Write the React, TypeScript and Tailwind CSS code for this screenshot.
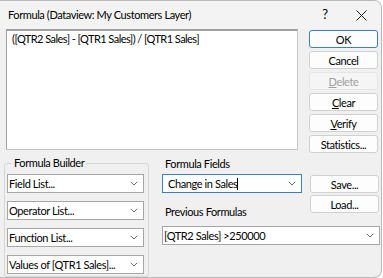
import React from "react";

function Chevron() {
  return (
    <svg width="8" height="5" viewBox="0 0 8 5" className="shrink-0">
      <path d="M0.8 0.8 L4 4 L7.2 0.8" fill="none" stroke="#6a6a6a" strokeWidth="1" />
    </svg>
  );
}

function Btn({
  children,
  primary,
  disabled,
}: {
  children: React.ReactNode;
  primary?: boolean;
  disabled?: boolean;
}) {
  let cls = "border-[#d0d0d0] bg-[#fdfdfd] text-black";
  if (primary) cls = "border-[#3b7fc4] bg-[#fdfdfd] text-black";
  if (disabled) cls = "border-[#e5e5e5] bg-[#f5f5f5] text-[#a0a0a0]";
  return (
    <div
      className={`h-[18px] w-[69px] rounded-[3px] border flex items-center justify-center text-[11px] leading-none ${cls}`}
    >
      {children}
    </div>
  );
}

function Combo({
  text,
  focused,
  className,
  pl,
}: {
  text: React.ReactNode;
  focused?: boolean;
  className?: string;
  pl?: string;
}) {
  return (
    <div
      className={`h-[19px] bg-white border flex items-center justify-between pr-[5px] text-[11px] leading-none ${
        focused ? "border-[#3b7fc4]" : "border-[#a6a6a6]"
      } ${pl ?? "pl-[1px]"} ${className ?? ""}`}
    >
      <span className="whitespace-nowrap">{text}</span>
      <Chevron />
    </div>
  );
}

export default function App() {
  return (
    <div className="w-[383px] h-[278px] bg-white font-['Lato',sans-serif] tracking-[-0.4px] text-black">
      <div className="w-[382px] h-[278px] bg-[#f0f0f0] border-t border-r border-b border-[#b9b9b9] rounded-tr-[8px] rounded-br-[8px] flex flex-col overflow-hidden">
        {/* Title bar */}
        <div className="h-[28px] shrink-0 flex items-center bg-[#f3f3f3] pl-[8px]">
          <span className="text-[11px] flex-1">Formula (Dataview: My Customers Layer)</span>
          <span className="text-[13px] w-[20px] text-center mr-[21px]">?</span>
          <svg width="11" height="11" viewBox="0 0 11 11" className="mr-[14px]">
            <path d="M0.5 0.5 L10.5 10.5 M10.5 0.5 L0.5 10.5" stroke="#1a1a1a" strokeWidth="1" />
          </svg>
        </div>

        {/* Formula area */}
        <div className="flex pl-[6px]">
          <div className="w-[292px] h-[121px] bg-white border border-[#c8c8c8] border-t-2 border-t-[#a0a0a0] border-l-[#a0a0a0] pl-[5px] pt-[1px] text-[11px] leading-[14px] tracking-[-0.55px]">
            ([QTR2 Sales] - [QTR1 Sales]) / [QTR1 Sales]
          </div>
          <div className="ml-[11px] pt-[1px] flex flex-col gap-[3px]">
            <Btn primary>OK</Btn>
            <Btn>Cancel</Btn>
            <Btn disabled>
              <span>
                <u>D</u>elete
              </span>
            </Btn>
            <Btn>
              <span>
                <u>C</u>lear
              </span>
            </Btn>
            <Btn>
              <span>
                <u>V</u>erify
              </span>
            </Btn>
            <Btn>Statistics...</Btn>
          </div>
        </div>

        {/* Bottom */}
        <div className="flex pl-[4px] pt-[10px]">
          {/* Formula Builder group */}
          <div className="relative w-[145px] h-[114px] border border-[#d6d6d6] rounded-[3px]">
            <span className="absolute left-[7px] top-[-8px] bg-[#f0f0f0] px-[2px] text-[11px] leading-[14px]">
              Formula Builder
            </span>
            <div className="flex flex-col gap-[8px] pl-[2px] pt-[10px]">
              <Combo text="Field List..." className="w-[137px]" />
              <Combo text="Operator List..." className="w-[137px]" />
              <Combo text="Function List..." className="w-[137px]" />
              <Combo text="Values of [QTR1 Sales]..." className="w-[137px]" />
            </div>
          </div>

          <div className="ml-[13px] flex flex-col">
            <div className="flex">
              <div className="w-[140px] flex flex-col">
                <span className="text-[11px] leading-[14px] pl-[3px] mt-[-6px]">Formula Fields</span>
                <Combo
                  focused
                  pl="pl-[5px]"
                  text={
                    <span>
                      Change in Sales
                      <span className="inline-block w-px h-[12px] bg-black align-[-2px]" />
                    </span>
                  }
                  className="w-[140px] mt-[3px]"
                />
                <span className="text-[11px] leading-[14px] pl-[3px] mt-[12px]">Previous Formulas</span>
              </div>
              <div className="ml-[8px] flex flex-col gap-[2px] pt-[12px]">
                <Btn>Save...</Btn>
                <Btn>Load...</Btn>
              </div>
            </div>
            <Combo text="[QTR2 Sales] >250000" className="w-[218px] mt-[7px]" />
          </div>
        </div>
      </div>
    </div>
  );
}
